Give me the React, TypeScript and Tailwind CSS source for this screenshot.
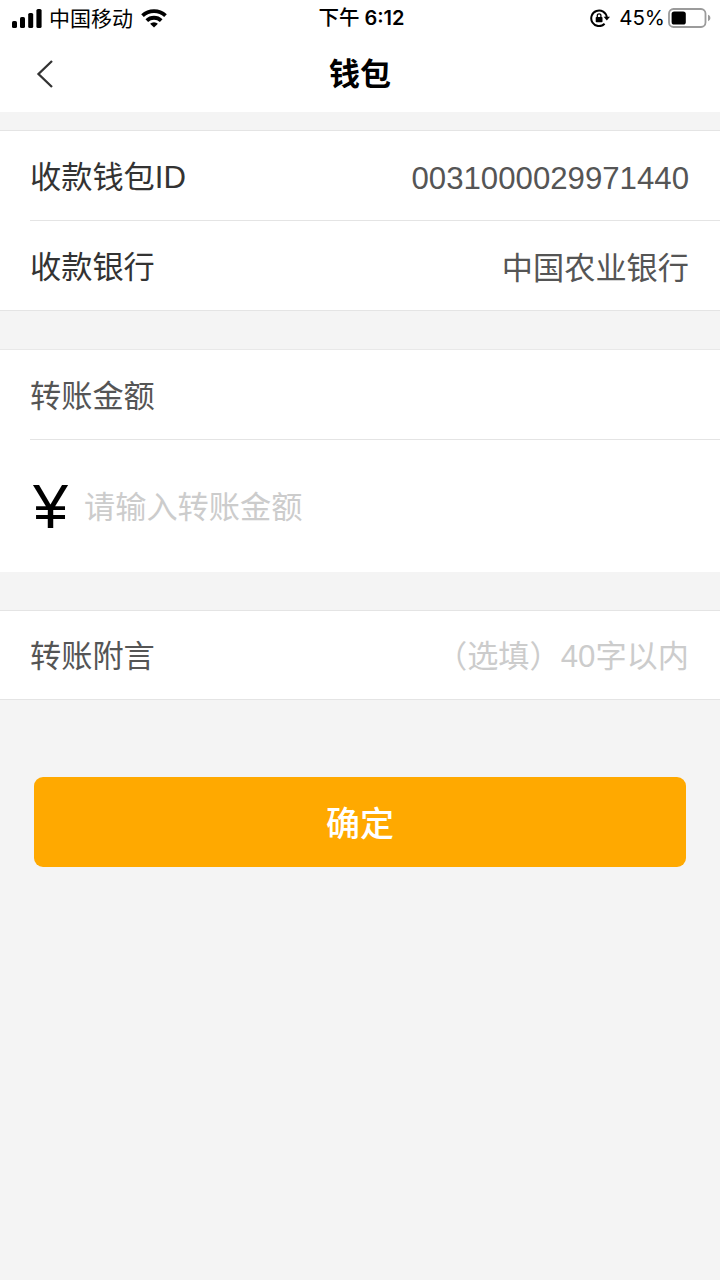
import { useState } from 'react'

interface InfoRow {
  label: string
  value: string
}

const PAYEE_ROWS: InfoRow[] = [
  { label: '收款钱包ID', value: '0031000029971440' },
  { label: '收款银行', value: '中国农业银行' },
]

function StatusBar() {
  return (
    <div className="h-9 pl-3 pr-[9px] grid grid-cols-[1fr_auto_1fr] items-center text-black font-['Inter','Noto_Sans_CJK_SC',sans-serif]">
      <div className="flex items-center">
        <svg className="w-[30px] h-[19px] shrink-0" viewBox="0 0 30 19" fill="currentColor">
          <rect x="0" y="12" width="5" height="7" rx="1.6" />
          <rect x="8" y="8" width="5" height="11" rx="1.6" />
          <rect x="16.2" y="4" width="5" height="15" rx="1.6" />
          <rect x="24.4" y="0" width="5.2" height="19" rx="1.6" />
        </svg>
        <span className="ml-[7px] text-[21px] leading-none">中国移动</span>
        <svg className="ml-2 w-[26px] h-[19px] shrink-0" viewBox="0 0 26 19" fill="none" stroke="currentColor" strokeWidth={3.8}>
          <path d="M1.5 6.6a16.8 16.8 0 0 1 23 0" />
          <path d="M5.8 11.6a10.5 10.5 0 0 1 14.4 0" />
          <path d="M13 18.6l-3.9-3.8a5.8 5.8 0 0 1 7.8 0z" fill="currentColor" stroke="none" />
        </svg>
      </div>
      <div className="pt-px text-[20px] leading-none font-semibold whitespace-nowrap">
        <span className="text-[20.5px] font-medium">下午</span>
        <span className="ml-[5px]">6:12</span>
      </div>
      <div className="flex items-center justify-end">
        <svg className="w-5 h-[18px] shrink-0" viewBox="0 0 20 18" fill="none" stroke="currentColor" strokeWidth={2}>
          <path d="M14.6 14.8A7.8 7.8 0 1 1 16.8 8.4" />
          <path d="M13.6 7.8h6.4l-3.2 3.8z" fill="currentColor" stroke="none" />
          <rect x="5.7" y="8" width="6.8" height="5.2" rx="0.8" fill="currentColor" stroke="none" />
          <path d="M7.3 8.2V6.6a1.8 1.8 0 0 1 3.6 0v1.6" strokeWidth={1.3} />
        </svg>
        <span className="ml-[9px] pt-px text-[20.5px] leading-none">45%</span>
        <svg className="ml-[3px] w-[43px] h-5 shrink-0" viewBox="0 0 43 20" fill="none">
          <rect x="1" y="1" width="36.5" height="18" rx="4.5" stroke="#9b9b9b" strokeWidth={1.8} />
          <rect x="3.6" y="3.4" width="14.2" height="13.2" rx="2.6" fill="black" />
          <path d="M40 6.8c1.6.7 2.4 1.8 2.4 3.2s-.8 2.5-2.4 3.2z" fill="#9b9b9b" />
        </svg>
      </div>
    </div>
  )
}

function Header() {
  return (
    <header className="h-[76px] px-9 grid grid-cols-[1fr_auto_1fr] items-center">
      <button aria-label="返回" className="justify-self-start">
        <svg className="w-[18px] h-7" viewBox="0 0 18 28" fill="none" stroke="#333333" strokeWidth={2.3}>
          <path d="M16 1L2.5 14L16 27" />
        </svg>
      </button>
      <h1 className="text-[31px] leading-none font-bold text-black">钱包</h1>
    </header>
  )
}

export default function App() {
  const [amount, setAmount] = useState('')
  const [remark, setRemark] = useState('')

  return (
    <div className="w-full min-h-screen bg-[#f4f4f4] text-[31.2px] leading-none font-['Liberation_Sans','Noto_Sans_CJK_SC',sans-serif]">
      <div className="h-28 bg-white">
        <StatusBar />
        <Header />
      </div>

      {/* Payee */}
      <section className="mt-[18px] bg-white border-y border-[#e4e4e4] pl-[30px] divide-y divide-[#e4e4e4]">
        {PAYEE_ROWS.map(({ label, value }) => (
          <div key={label} className="h-[89.5px] pt-1 pr-[31px] flex items-center justify-between">
            <span className="text-[#333333]">{label}</span>
            <span className="pt-0.5 text-[#555555]">{value}</span>
          </div>
        ))}
      </section>

      {/* Amount */}
      <section className="mt-[38px] bg-white border-t border-[#e8e8e8] pl-[30px]">
        <div className="h-[90px] pt-1 flex items-center border-b border-[#e4e4e4] text-[#555555]">转账金额</div>
        <label className="h-[132px] flex items-center">
          <span className="w-[54px] pl-[3px] text-[63px] text-black">¥</span>
          <input
            className="flex-1 min-w-0 h-12 pt-[3px] outline-none text-[#333333] placeholder:text-[#cccccc]"
            placeholder="请输入转账金额"
            value={amount}
            onChange={e => setAmount(e.target.value)}
          />
        </label>
      </section>

      {/* Remark */}
      <section className="mt-[38px] bg-white border-y border-[#e4e4e4] pl-[30px] pr-[31px]">
        <label className="h-[88px] pt-1 flex items-center">
          <span className="text-[#555555]">转账附言</span>
          <input
            className="flex-1 min-w-0 h-12 text-right outline-none text-[#333333] placeholder:text-[#cccccc]"
            placeholder="（选填）40字以内"
            value={remark}
            onChange={e => setRemark(e.target.value)}
          />
        </label>
      </section>

      <div className="px-[34px] pt-[77px]">
        <button className="w-full h-[90px] pt-1 rounded-[9px] bg-[#ffa900] text-white text-[34px] font-medium">确定</button>
      </div>
    </div>
  )
}
